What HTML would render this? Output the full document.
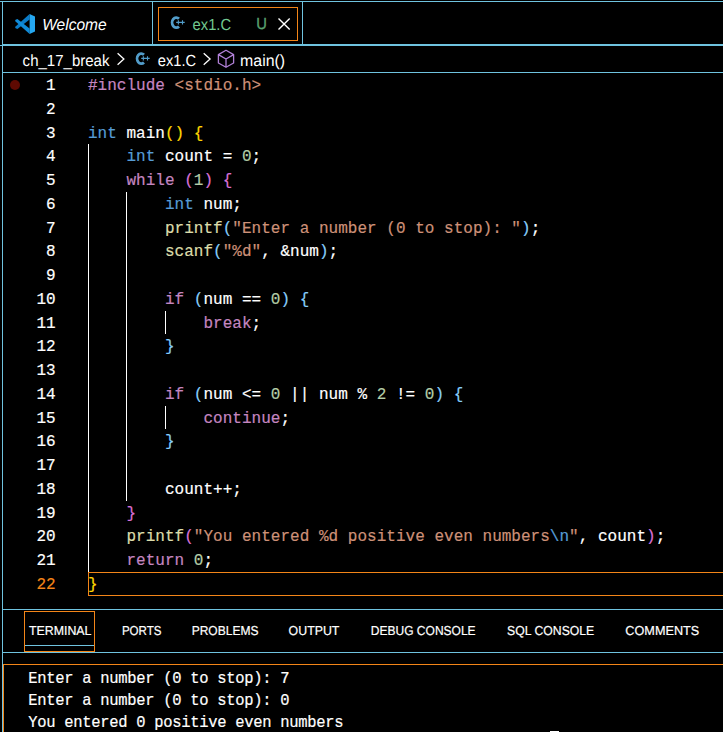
<!DOCTYPE html>
<html lang="en">
<head>
<meta charset="utf-8">
<title>ex1.C - ch_17_break</title>
<style>
*{box-sizing:border-box;margin:0;padding:0}
html,body{width:723px;height:732px;background:#000;overflow:hidden}
body{position:relative;font-family:"Liberation Sans",sans-serif;color:#fff}
.abs{position:absolute}
.hl{position:absolute;left:2px;width:721px;height:1px;background:#6FC3DF}
.vl{position:absolute;width:1px;background:#6FC3DF}
.ui{text-rendering:geometricPrecision;position:absolute;white-space:nowrap;transform-origin:0 0;font-family:"Liberation Sans",sans-serif;color:#fff;line-height:1}
.ln{-webkit-text-stroke:0.18px;transform:scaleY(1.08);transform-origin:0 3.5px;position:absolute;left:19.6px;width:36px;text-align:right;font-family:"Liberation Mono",monospace;font-size:16px;line-height:23.75px;height:23.75px;color:#fff;white-space:pre}
.ln.cur{color:#F38518}
.cl{letter-spacing:0.02px;-webkit-text-stroke:0.18px;transform:scaleY(1.08);transform-origin:0 3.5px;position:absolute;left:88px;font-family:"Liberation Mono",monospace;font-size:16px;line-height:23.75px;height:23.75px;white-space:pre;color:#fff}
.tl{-webkit-text-stroke:0.18px;transform:scaleY(1.08);transform-origin:0 14.8px;position:absolute;left:28.2px;font-family:"Liberation Mono",monospace;font-size:15.5px;letter-spacing:-0.3px;line-height:22px;height:22px;white-space:pre;color:#fff}
.guide{position:absolute;width:1px;background:#fff}
</style>
</head>
<body>
<!-- frame lines -->
<div class="hl" style="top:1px;left:0;width:723px"></div>
<div class="hl" style="top:44px;height:2px"></div>
<div class="hl" style="top:45px;left:0;width:3px"></div>
<div class="hl" style="top:72px"></div>
<div class="vl" style="left:2px;top:1px;height:731px"></div>
<div class="vl" style="left:152px;top:1px;height:44px"></div>
<div class="vl" style="left:302px;top:1px;height:44px"></div>

<!-- tab 1: Welcome -->
<svg class="abs" style="left:15px;top:14px" width="20" height="20" viewBox="0 0 100 100">
  <path d="M73 0 L0 65 L3 71 L12 75 L73 28 Z" fill="#0B7CC8"/>
  <path d="M12 25 L3 29 L0 35 L73 100 L73 72 Z" fill="#108BD8"/>
  <path d="M73 0 L100 12 V88 L73 100 Z" fill="#25A7F0"/>
</svg>

<!-- tab 2: ex1.C -->
<div class="abs" style="left:158px;top:7px;width:140px;height:34px;border:1px solid #F38518"></div>
<svg class="abs" style="left:170px;top:15px" width="16" height="16" viewBox="0 0 16 16">
  <path d="M9.0 3.77 A4.2 5 0 1 0 9.0 11.43" fill="none" stroke="#529DCA" stroke-width="2.8"/>
  <path d="M6.2 7.4h4.3M8.35 5.2v4.4M10.3 7.4h4.4M12.5 5.2v4.4" stroke="#529DCA" stroke-width="1.1" fill="none"/>
</svg>
<svg class="abs" style="left:277px;top:17px" width="14" height="14" viewBox="0 0 14 14">
  <path d="M1.5 1.6 L12.7 12.4 M12.7 1.6 L1.5 12.4" stroke="#fff" stroke-width="1.4" fill="none"/>
</svg>

<!-- breadcrumbs -->
<svg class="abs" style="left:115px;top:52px" width="12" height="14" viewBox="0 0 12 14"><path d="M2.6 1.2 L8.9 7.0 L2.6 12.8" stroke="#fff" stroke-width="1.3" fill="none"/></svg>
<svg class="abs" style="left:135.2px;top:51px" width="16" height="16" viewBox="0 0 16 16">
  <path d="M9.0 3.77 A4.2 5 0 1 0 9.0 11.43" fill="none" stroke="#529DCA" stroke-width="2.8"/>
  <path d="M6.2 7.4h4.3M8.35 5.2v4.4M10.3 7.4h4.4M12.5 5.2v4.4" stroke="#529DCA" stroke-width="1.1" fill="none"/>
</svg>
<svg class="abs" style="left:200.5px;top:52px" width="12" height="14" viewBox="0 0 12 14"><path d="M2.7 1.2 L9.1 7.0 L2.7 12.8" stroke="#fff" stroke-width="1.3" fill="none"/></svg>
<svg class="abs" style="left:216px;top:48px" width="20" height="22" viewBox="0 0 20 22">
  <path d="M10 2.3 L17.6 6.6 V15 L10 19.3 L2.4 15 V6.6 Z M2.4 6.6 L10 11 L17.6 6.6 M10 11 V19.3" fill="none" stroke="#B180D7" stroke-width="1.3" stroke-linejoin="round"/>
</svg>

<div class="ui" id="l_welcome" style="left:42px;top:17px;font-size:16.1px;transform:translate(0.19px,0) scale(0.9659,1);font-style:italic">Welcome</div>
<div class="ui" id="l_tab" style="left:192px;top:17px;font-size:16.1px;transform:translate(0.58px,0) scale(0.9170,1);color:#73C991">ex1.C</div>
<div class="ui" id="l_u" style="left:256px;top:16px;font-size:16.1px;transform:translate(0.35px,0) scale(0.9169,1);color:#58A06F;-webkit-text-stroke:0.35px">U</div>
<div class="ui" id="l_bc1" style="left:22px;top:53px;font-size:16.1px;transform:translate(0.62px,0) scale(0.9334,1)">ch_17_break</div>
<div class="ui" id="l_bc2" style="left:157px;top:53px;font-size:16.1px;transform:translate(0.85px,0) scale(0.9094,1)">ex1.C</div>
<div class="ui" id="l_bc3" style="left:240px;top:53px;font-size:16.1px;transform:translate(0.06px,0) scale(0.9871,1)">main()</div>
<div class="ui" id="l_p1" style="left:28px;top:624px;font-size:13.0px;transform:translate(0.89px,0) scale(0.9519,1);-webkit-text-stroke:0.2px">TERMINAL</div>
<div class="ui" id="l_p2" style="left:121px;top:624px;font-size:13.0px;transform:translate(0.90px,0) scale(0.8893,1);-webkit-text-stroke:0.2px">PORTS</div>
<div class="ui" id="l_p3" style="left:191px;top:624px;font-size:13.0px;transform:translate(0.65px,0) scale(0.9244,1);-webkit-text-stroke:0.2px">PROBLEMS</div>
<div class="ui" id="l_p4" style="left:288px;top:624px;font-size:13.0px;transform:translate(0.59px,0) scale(0.9506,1);-webkit-text-stroke:0.2px">OUTPUT</div>
<div class="ui" id="l_p5" style="left:370px;top:624px;font-size:13.0px;transform:translate(0.79px,0) scale(0.9244,1);-webkit-text-stroke:0.2px">DEBUG CONSOLE</div>
<div class="ui" id="l_p6" style="left:507px;top:624px;font-size:13.0px;transform:translate(0.09px,0) scale(0.9401,1);-webkit-text-stroke:0.2px">SQL CONSOLE</div>
<div class="ui" id="l_p7" style="left:625px;top:624px;font-size:13.0px;transform:translate(0.35px,0) scale(0.9742,1);-webkit-text-stroke:0.2px">COMMENTS</div>

<!-- breakpoint hint -->
<div class="abs" style="left:10px;top:80px;width:10px;height:10px;border-radius:50%;background:#5E0A02"></div>

<!-- indent guides -->
<div class="guide" style="left:88px;top:144px;height:428px"></div>
<div class="guide" style="left:126px;top:192px;height:309px"></div>
<div class="guide" style="left:165px;top:311px;height:23px"></div>
<div class="guide" style="left:165px;top:406px;height:23px"></div>

<!-- current line box -->
<div class="abs" style="left:88px;top:572px;width:640px;height:24px;border:1px solid #F38518"></div>

<!-- code -->
<div class="ln" style="top:74.00px">1</div>
<div class="cl" style="top:74.00px"><span style="color:#C586C0">#include</span><span style="color:#FFFFFF"> </span><span style="color:#CE9178">&lt;stdio.h&gt;</span></div>
<div class="ln" style="top:97.75px">2</div>
<div class="ln" style="top:121.50px">3</div>
<div class="cl" style="top:121.50px"><span style="color:#569CD6">int</span><span style="color:#FFFFFF"> main</span><span style="color:#FFD700">()</span><span style="color:#FFFFFF"> </span><span style="color:#FFD700">{</span></div>
<div class="ln" style="top:145.25px">4</div>
<div class="cl" style="top:145.25px"><span style="color:#FFFFFF">    </span><span style="color:#569CD6">int</span><span style="color:#FFFFFF"> count = </span><span style="color:#B5CEA8">0</span><span style="color:#FFFFFF">;</span></div>
<div class="ln" style="top:169.00px">5</div>
<div class="cl" style="top:169.00px"><span style="color:#FFFFFF">    </span><span style="color:#C586C0">while</span><span style="color:#FFFFFF"> </span><span style="color:#DA70D6">(</span><span style="color:#B5CEA8">1</span><span style="color:#DA70D6">)</span><span style="color:#FFFFFF"> </span><span style="color:#DA70D6">{</span></div>
<div class="ln" style="top:192.75px">6</div>
<div class="cl" style="top:192.75px"><span style="color:#FFFFFF">        </span><span style="color:#569CD6">int</span><span style="color:#FFFFFF"> num;</span></div>
<div class="ln" style="top:216.50px">7</div>
<div class="cl" style="top:216.50px"><span style="color:#FFFFFF">        </span><span style="color:#DCDCAA">printf</span><span style="color:#87CEFA">(</span><span style="color:#CE9178">&quot;Enter a number (0 to stop): &quot;</span><span style="color:#87CEFA">)</span><span style="color:#FFFFFF">;</span></div>
<div class="ln" style="top:240.25px">8</div>
<div class="cl" style="top:240.25px"><span style="color:#FFFFFF">        </span><span style="color:#DCDCAA">scanf</span><span style="color:#87CEFA">(</span><span style="color:#CE9178">&quot;%d&quot;</span><span style="color:#FFFFFF">, &amp;num</span><span style="color:#87CEFA">)</span><span style="color:#FFFFFF">;</span></div>
<div class="ln" style="top:264.00px">9</div>
<div class="ln" style="top:287.75px">10</div>
<div class="cl" style="top:287.75px"><span style="color:#FFFFFF">        </span><span style="color:#C586C0">if</span><span style="color:#FFFFFF"> </span><span style="color:#87CEFA">(</span><span style="color:#FFFFFF">num == </span><span style="color:#B5CEA8">0</span><span style="color:#87CEFA">)</span><span style="color:#FFFFFF"> </span><span style="color:#87CEFA">{</span></div>
<div class="ln" style="top:311.50px">11</div>
<div class="cl" style="top:311.50px"><span style="color:#FFFFFF">            </span><span style="color:#C586C0">break</span><span style="color:#FFFFFF">;</span></div>
<div class="ln" style="top:335.25px">12</div>
<div class="cl" style="top:335.25px"><span style="color:#FFFFFF">        </span><span style="color:#87CEFA">}</span></div>
<div class="ln" style="top:359.00px">13</div>
<div class="ln" style="top:382.75px">14</div>
<div class="cl" style="top:382.75px"><span style="color:#FFFFFF">        </span><span style="color:#C586C0">if</span><span style="color:#FFFFFF"> </span><span style="color:#87CEFA">(</span><span style="color:#FFFFFF">num &lt;= </span><span style="color:#B5CEA8">0</span><span style="color:#FFFFFF"> || num % </span><span style="color:#B5CEA8">2</span><span style="color:#FFFFFF"> != </span><span style="color:#B5CEA8">0</span><span style="color:#87CEFA">)</span><span style="color:#FFFFFF"> </span><span style="color:#87CEFA">{</span></div>
<div class="ln" style="top:406.50px">15</div>
<div class="cl" style="top:406.50px"><span style="color:#FFFFFF">            </span><span style="color:#C586C0">continue</span><span style="color:#FFFFFF">;</span></div>
<div class="ln" style="top:430.25px">16</div>
<div class="cl" style="top:430.25px"><span style="color:#FFFFFF">        </span><span style="color:#87CEFA">}</span></div>
<div class="ln" style="top:454.00px">17</div>
<div class="ln" style="top:477.75px">18</div>
<div class="cl" style="top:477.75px"><span style="color:#FFFFFF">        count++;</span></div>
<div class="ln" style="top:501.50px">19</div>
<div class="cl" style="top:501.50px"><span style="color:#FFFFFF">    </span><span style="color:#DA70D6">}</span></div>
<div class="ln" style="top:525.25px">20</div>
<div class="cl" style="top:525.25px"><span style="color:#FFFFFF">    </span><span style="color:#DCDCAA">printf</span><span style="color:#DA70D6">(</span><span style="color:#CE9178">&quot;You entered %d positive even numbers</span><span style="color:#569CD6">\n</span><span style="color:#CE9178">&quot;</span><span style="color:#FFFFFF">, count</span><span style="color:#DA70D6">)</span><span style="color:#FFFFFF">;</span></div>
<div class="ln" style="top:549.00px">21</div>
<div class="cl" style="top:549.00px"><span style="color:#FFFFFF">    </span><span style="color:#C586C0">return</span><span style="color:#FFFFFF"> </span><span style="color:#B5CEA8">0</span><span style="color:#FFFFFF">;</span></div>
<div class="ln cur" style="top:572.75px">22</div>
<div class="cl" style="top:572.75px"><span style="color:#FFD700">}</span></div>

<!-- panel -->
<div class="hl" style="top:609px"></div>
<div class="hl" style="top:652px"></div>
<div class="abs" style="left:24px;top:611px;width:71px;height:41px;border:1px solid #F38518"></div>
<div class="abs" style="left:25px;top:645px;width:69px;height:1px;background:#6FC3DF"></div>

<!-- terminal -->
<div class="abs" style="left:3px;top:664px;width:730px;height:80px;border:1px solid #F38518"></div>
<div class="tl" style="top:668px">Enter a number (0 to stop): 7</div>
<div class="tl" style="top:690px">Enter a number (0 to stop): 0</div>
<div class="tl" style="top:712px">You entered 0 positive even numbers</div>
<div class="abs" style="left:550px;top:731px;width:9px;height:1px;background:#fff"></div>
</body>
</html>
